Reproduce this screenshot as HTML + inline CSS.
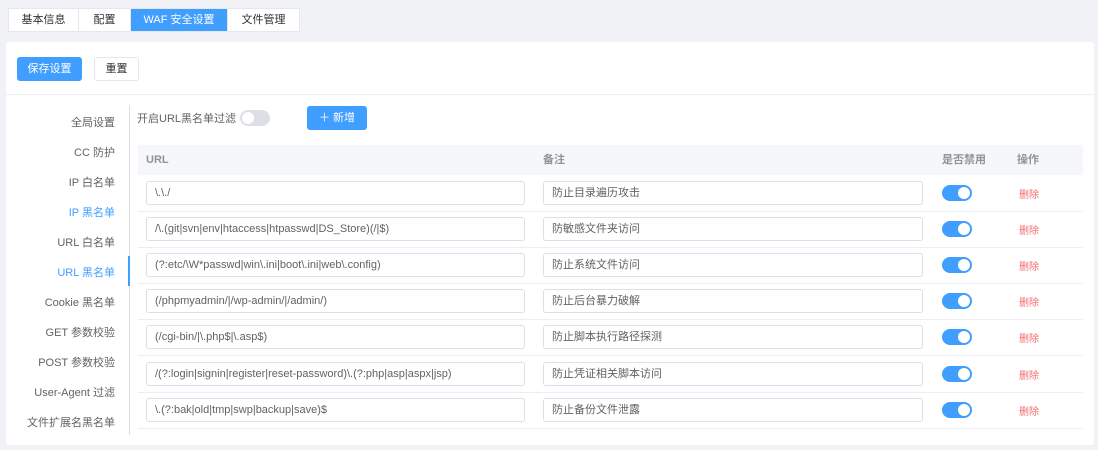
<!DOCTYPE html>
<html><head><meta charset="utf-8"><style>
*{box-sizing:border-box;margin:0;padding:0}
body{width:1098px;height:450px;background:#f0f2f5;font-family:"Liberation Sans","Noto Sans CJK SC",sans-serif;font-size:11px;color:#606266;position:relative;overflow:hidden}
.abs{position:absolute}
.tabs{left:8px;top:8px;height:24px;display:flex;background:#fff;border:1px solid #e4e7ed}
.tabs div{line-height:22px;color:#303133;border-right:1px solid #e4e7ed;text-align:center}
.tabs .on{background:#409eff;color:#fff}
.card{left:6px;top:42px;width:1088px;height:403px;background:#fff;border-radius:3px}
.btn{height:24px;line-height:22px;border-radius:3px;text-align:center;font-size:11px}
.menu div{position:absolute;right:0;width:120px;text-align:right;padding-right:14px;color:#606266}
.sw{width:30px;height:16px;border-radius:8px;background:#409eff;position:absolute}
.sw:after{content:"";position:absolute;right:2px;top:2px;width:12px;height:12px;border-radius:50%;background:#fff}
.in{position:absolute;height:24px;border:1px solid #dcdfe6;border-radius:3px;padding-left:8px;line-height:22px;color:#606266;background:#fff;white-space:nowrap;overflow:hidden}
.del{position:absolute;color:#f56c6c;font-size:10px}
.rl{position:absolute;left:138px;width:945px;height:1px;background:#ebeef5}
</style></head><body>
<div class="abs tabs"><div style="width:70px">基本信息</div><div style="width:52px">配置</div><div class="on" style="width:97px">WAF 安全设置</div><div style="border:0;width:71px">文件管理</div></div>
<div class="abs card"></div>
<div class="abs btn" style="left:17px;top:57px;width:65px;background:#409eff;color:#fff;border:1px solid #409eff">保存设置</div>
<div class="abs btn" style="left:94px;top:57px;width:45px;border:1px solid #e4e7ed;color:#303133">重置</div>
<div class="abs" style="left:6px;top:94px;width:1088px;height:1px;background:#ebeef5"></div>
<div class="abs" style="left:129px;top:105px;width:1px;height:330px;background:#dcdfe6"></div>
<div class="abs" style="left:128px;top:256px;width:2px;height:30px;background:#409eff"></div>
<div class="abs menu" style="left:0;top:0;width:129px;height:450px">
<div style="top:114px">全局设置</div><div style="top:144px">CC 防护</div><div style="top:174px">IP 白名单</div><div style="top:204px;color:#409eff">IP 黑名单</div><div style="top:234px">URL 白名单</div><div style="top:264px;color:#409eff">URL 黑名单</div><div style="top:294px">Cookie 黑名单</div><div style="top:324px">GET 参数校验</div><div style="top:354px">POST 参数校验</div><div style="top:384px">User-Agent 过滤</div><div style="top:414px">文件扩展名黑名单</div>
</div>
<div class="abs" style="left:137px;top:110px;color:#606266">开启URL黑名单过滤</div>
<div class="abs" style="left:240px;top:110px;width:30px;height:16px;border-radius:8px;background:#dcdfe6"><div style="position:absolute;left:2px;top:2px;width:12px;height:12px;border-radius:50%;background:#fff"></div></div>
<div class="abs btn" style="left:307px;top:106px;width:60px;background:#409eff;color:#fff;line-height:24px">＋ 新增</div>
<div class="abs" style="left:138px;top:145px;width:945px;height:30px;background:#f5f7fa;font-weight:bold;color:#909399;line-height:30px">
<span style="position:absolute;left:8px">URL</span><span style="position:absolute;left:405px">备注</span><span style="position:absolute;left:804px">是否禁用</span><span style="position:absolute;left:879px">操作</span></div>
<div class="in" style="left:146px;top:181px;width:379px">\.\./</div><div class="in" style="left:543px;top:181px;width:380px">防止目录遍历攻击</div><div class="sw" style="left:942px;top:185px"></div><div class="del" style="left:1019px;top:186px">删除</div><div class="rl" style="top:211px"></div>
<div class="in" style="left:146px;top:217px;width:379px">/\.(git|svn|env|htaccess|htpasswd|DS_Store)(/|$)</div><div class="in" style="left:543px;top:217px;width:380px">防敏感文件夹访问</div><div class="sw" style="left:942px;top:221px"></div><div class="del" style="left:1019px;top:222px">删除</div><div class="rl" style="top:247px"></div>
<div class="in" style="left:146px;top:253px;width:379px">(?:etc/\W*passwd|win\.ini|boot\.ini|web\.config)</div><div class="in" style="left:543px;top:253px;width:380px">防止系统文件访问</div><div class="sw" style="left:942px;top:257px"></div><div class="del" style="left:1019px;top:258px">删除</div><div class="rl" style="top:283px"></div>
<div class="in" style="left:146px;top:289px;width:379px">(/phpmyadmin/|/wp-admin/|/admin/)</div><div class="in" style="left:543px;top:289px;width:380px">防止后台暴力破解</div><div class="sw" style="left:942px;top:293px"></div><div class="del" style="left:1019px;top:294px">删除</div><div class="rl" style="top:319px"></div>
<div class="in" style="left:146px;top:325px;width:379px">(/cgi-bin/|\.php$|\.asp$)</div><div class="in" style="left:543px;top:325px;width:380px">防止脚本执行路径探测</div><div class="sw" style="left:942px;top:329px"></div><div class="del" style="left:1019px;top:330px">删除</div><div class="rl" style="top:355px"></div>
<div class="in" style="left:146px;top:362px;width:379px">/(?:login|signin|register|reset-password)\.(?:php|asp|aspx|jsp)</div><div class="in" style="left:543px;top:362px;width:380px">防止凭证相关脚本访问</div><div class="sw" style="left:942px;top:366px"></div><div class="del" style="left:1019px;top:367px">删除</div><div class="rl" style="top:392px"></div>
<div class="in" style="left:146px;top:398px;width:379px">\.(?:bak|old|tmp|swp|backup|save)$</div><div class="in" style="left:543px;top:398px;width:380px">防止备份文件泄露</div><div class="sw" style="left:942px;top:402px"></div><div class="del" style="left:1019px;top:403px">删除</div><div class="rl" style="top:428px"></div>
</body></html>
